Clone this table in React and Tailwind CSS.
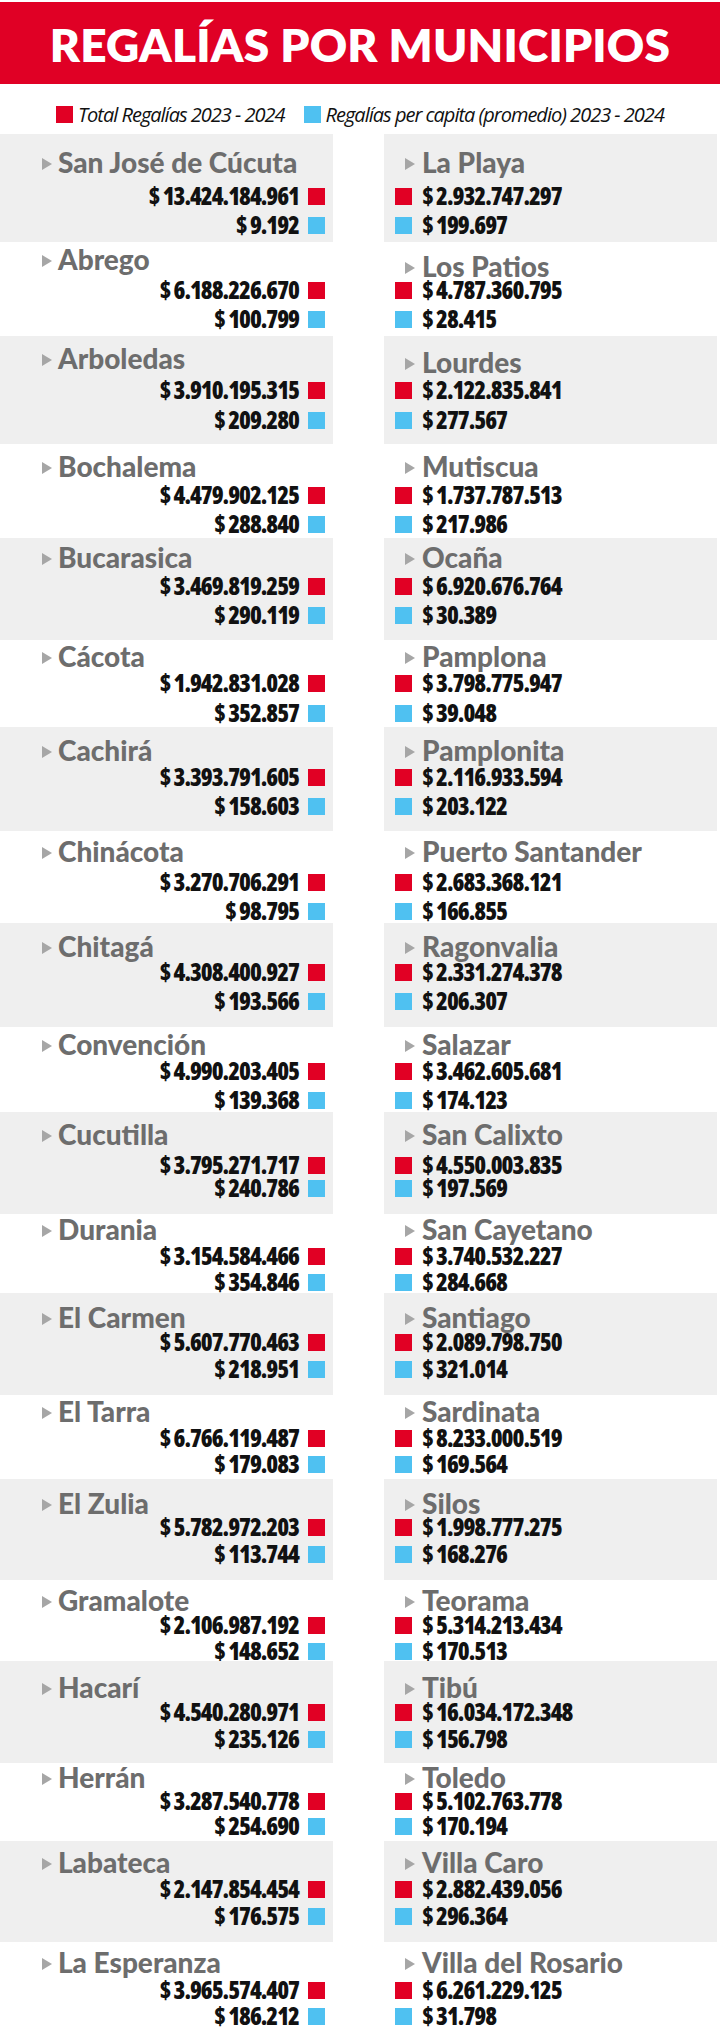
import React from 'react';

const rows = [
  { l: ['San José de Cúcuta', '13.424.184.961', '9.192'], r: ['La Playa', '2.932.747.297', '199.697'], h: 'h-[108px]', nb: 'h-[50px]', ptL: 'pt-[17px]', ptR: 'pt-[17px]', mt: 'mt-[5px]' },
  { l: ['Abrego', '6.188.226.670', '100.799'], r: ['Los Patios', '4.787.360.795', '28.415'], h: 'h-[94px]', nb: 'h-[36px]', ptL: 'pt-[6px]', ptR: 'pt-[13px]', mt: 'mt-[5px]' },
  { l: ['Arboledas', '3.910.195.315', '209.280'], r: ['Lourdes', '2.122.835.841', '277.567'], h: 'h-[108px]', nb: 'h-[42px]', ptL: 'pt-[11px]', ptR: 'pt-[15px]', mt: 'mt-[6px]' },
  { l: ['Bochalema', '4.479.902.125', '288.840'], r: ['Mutiscua', '1.737.787.513', '217.986'], h: 'h-[94px]', nb: 'h-[39px]', ptL: 'pt-[11px]', ptR: 'pt-[11px]', mt: 'mt-[5px]' },
  { l: ['Bucarasica', '3.469.819.259', '290.119'], r: ['Ocaña', '6.920.676.764', '30.389'], h: 'h-[102px]', nb: 'h-[36px]', ptL: 'pt-[8px]', ptR: 'pt-[8px]', mt: 'mt-[5px]' },
  { l: ['Cácota', '1.942.831.028', '352.857'], r: ['Pamplona', '3.798.775.947', '39.048'], h: 'h-[87px]', nb: 'h-[31px]', ptL: 'pt-[5px]', ptR: 'pt-[5px]', mt: 'mt-[6px]' },
  { l: ['Cachirá', '3.393.791.605', '158.603'], r: ['Pamplonita', '2.116.933.594', '203.122'], h: 'h-[104px]', nb: 'h-[38px]', ptL: 'pt-[12px]', ptR: 'pt-[12px]', mt: 'mt-[5px]' },
  { l: ['Chinácota', '3.270.706.291', '98.795'], r: ['Puerto Santander', '2.683.368.121', '166.855'], h: 'h-[92px]', nb: 'h-[39px]', ptL: 'pt-[9px]', ptR: 'pt-[9px]', mt: 'mt-[5px]' },
  { l: ['Chitagá', '4.308.400.927', '193.566'], r: ['Ragonvalia', '2.331.274.378', '206.307'], h: 'h-[104px]', nb: 'h-[37px]', ptL: 'pt-[12px]', ptR: 'pt-[12px]', mt: 'mt-[5px]' },
  { l: ['Convención', '4.990.203.405', '139.368'], r: ['Salazar', '3.462.605.681', '174.123'], h: 'h-[85px]', nb: 'h-[32px]', ptL: 'pt-[6px]', ptR: 'pt-[6px]', mt: 'mt-[5px]' },
  { l: ['Cucutilla', '3.795.271.717', '240.786'], r: ['San Calixto', '4.550.003.835', '197.569'], h: 'h-[102px]', nb: 'h-[41px]', ptL: 'pt-[11px]', ptR: 'pt-[11px]', mt: '-mt-px' },
  { l: ['Durania', '3.154.584.466', '354.846'], r: ['San Cayetano', '3.740.532.227', '284.668'], h: 'h-[79px]', nb: 'h-[30px]', ptL: 'pt-[4px]', ptR: 'pt-[4px]', mt: 'mt-[2px]' },
  { l: ['El Carmen', '5.607.770.463', '218.951'], r: ['Santiago', '2.089.798.750', '321.014'], h: 'h-[102px]', nb: 'h-[37px]', ptL: 'pt-[13px]', ptR: 'pt-[13px]', mt: 'mt-[3px]' },
  { l: ['El Tarra', '6.766.119.487', '179.083'], r: ['Sardinata', '8.233.000.519', '169.564'], h: 'h-[84px]', nb: 'h-[31px]', ptL: 'pt-[5px]', ptR: 'pt-[5px]', mt: 'mt-[2px]' },
  { l: ['El Zulia', '5.782.972.203', '113.744'], r: ['Silos', '1.998.777.275', '168.276'], h: 'h-[101px]', nb: 'h-[36px]', ptL: 'pt-[13px]', ptR: 'pt-[13px]', mt: 'mt-[3px]' },
  { l: ['Gramalote', '2.106.987.192', '148.652'], r: ['Teorama', '5.314.213.434', '170.513'], h: 'h-[81px]', nb: 'h-[33px]', ptL: 'pt-[9px]', ptR: 'pt-[9px]', mt: 'mt-[2px]' },
  { l: ['Hacarí', '4.540.280.971', '235.126'], r: ['Tibú', '16.034.172.348', '156.798'], h: 'h-[102px]', nb: 'h-[39px]', ptL: 'pt-[15px]', ptR: 'pt-[15px]', mt: 'mt-[3px]' },
  { l: ['Herrán', '3.287.540.778', '254.690'], r: ['Toledo', '5.102.763.778', '170.194'], h: 'h-[78px]', nb: 'h-[26px]', ptL: 'pt-[3px]', ptR: 'pt-[3px]', mt: 'mt-[1px]' },
  { l: ['Labateca', '2.147.854.454', '176.575'], r: ['Villa Caro', '2.882.439.056', '296.364'], h: 'h-[101px]', nb: 'h-[36px]', ptL: 'pt-[10px]', ptR: 'pt-[10px]', mt: 'mt-[3px]' },
  { l: ['La Esperanza', '3.965.574.407', '186.212'], r: ['Villa del Rosario', '6.261.229.125', '31.798'], h: 'h-[96px]', nb: 'h-[36px]', ptL: 'pt-[9px]', ptR: 'pt-[9px]', mt: 'mt-[2px]' },
];

function Arrow() {
  return (
    <svg width="10" height="12" viewBox="0 0 10 12" className="mt-[7px] shrink-0">
      <polygon points="0,0 10,6 0,12" fill="#a6a6a6" />
    </svg>
  );
}

function Name({ children }) {
  return (
    <span className="font-['Lato',sans-serif] font-black text-[28px] leading-[22px] text-[#6d6d6d] whitespace-nowrap">
      {children}
    </span>
  );
}

function Amount({ value }) {
  return (
    <span className="font-['Open_Sans',sans-serif] font-stretch-[75%] font-extrabold text-[24px] leading-[24px] text-[#111] whitespace-nowrap tracking-[-1px]">
      {`$ ${value}`}
    </span>
  );
}

function Square({ blue }) {
  return <span className={`block w-[17px] h-[17px] shrink-0 ${blue ? 'bg-[#4fc1f1]' : 'bg-[#e10024]'}`} />;
}

function LeftCell({ row, gray }) {
  const [name, total, capita] = row.l;
  return (
    <div className={`w-[333px] shrink-0 flex flex-col ${row.h} ${gray ? 'bg-[#efefef]' : 'bg-white'}`}>
      <div className={`${row.nb} ${row.ptL} shrink-0 flex items-start gap-[6px] pl-[42px]`}>
        <Arrow />
        <Name>{name}</Name>
      </div>
      <div className="h-[24px] flex items-center justify-end gap-[9px] pr-[8px]">
        <Amount value={total} />
        <Square />
      </div>
      <div className={`h-[24px] flex items-center justify-end gap-[9px] pr-[8px] ${row.mt}`}>
        <Amount value={capita} />
        <Square blue />
      </div>
    </div>
  );
}

function RightCell({ row, gray }) {
  const [name, total, capita] = row.r;
  return (
    <div className={`w-[333px] shrink-0 flex flex-col ${row.h} ${gray ? 'bg-[#efefef]' : 'bg-white'}`}>
      <div className={`${row.nb} ${row.ptR} shrink-0 flex items-start gap-[7px] pl-[21px]`}>
        <Arrow />
        <Name>{name}</Name>
      </div>
      <div className="h-[24px] flex items-center gap-[10px] pl-[11px]">
        <Square />
        <Amount value={total} />
      </div>
      <div className={`h-[24px] flex items-center gap-[10px] pl-[11px] ${row.mt}`}>
        <Square blue />
        <Amount value={capita} />
      </div>
    </div>
  );
}

export default function App() {
  return (
    <div className="w-[720px] h-[2038px] bg-white overflow-hidden">
      {/* Title band */}
      <div className="pt-[2px]">
        <div className="h-[82px] pt-[20px] bg-[#e00025] text-center">
          <h1 className="font-['Lato',sans-serif] font-extrabold text-[46px] leading-[46px] text-white tracking-[0.2px] whitespace-nowrap">
            REGALÍAS POR MUNICIPIOS
          </h1>
        </div>
      </div>

      {/* Legend */}
      <div className="h-[50px] pt-[22px]">
        <div className="h-[17px] flex items-center justify-center gap-[5px] font-['Open_Sans',sans-serif] font-medium italic text-[20px] tracking-[-1px] text-[#111]">
          <Square />
          <span className="mr-[14px] whitespace-nowrap">Total Regalías 2023 - 2024</span>
          <Square blue />
          <span className="whitespace-nowrap">Regalías per capita (promedio) 2023 - 2024</span>
        </div>
      </div>

      {/* Municipality rows */}
      <div className="flex flex-col">
        {rows.map((row, i) => (
          <div key={row.l[0]} className="flex gap-[51px]">
            <LeftCell row={row} gray={i % 2 === 0} />
            <RightCell row={row} gray={i % 2 === 0} />
          </div>
        ))}
      </div>
    </div>
  );
}
